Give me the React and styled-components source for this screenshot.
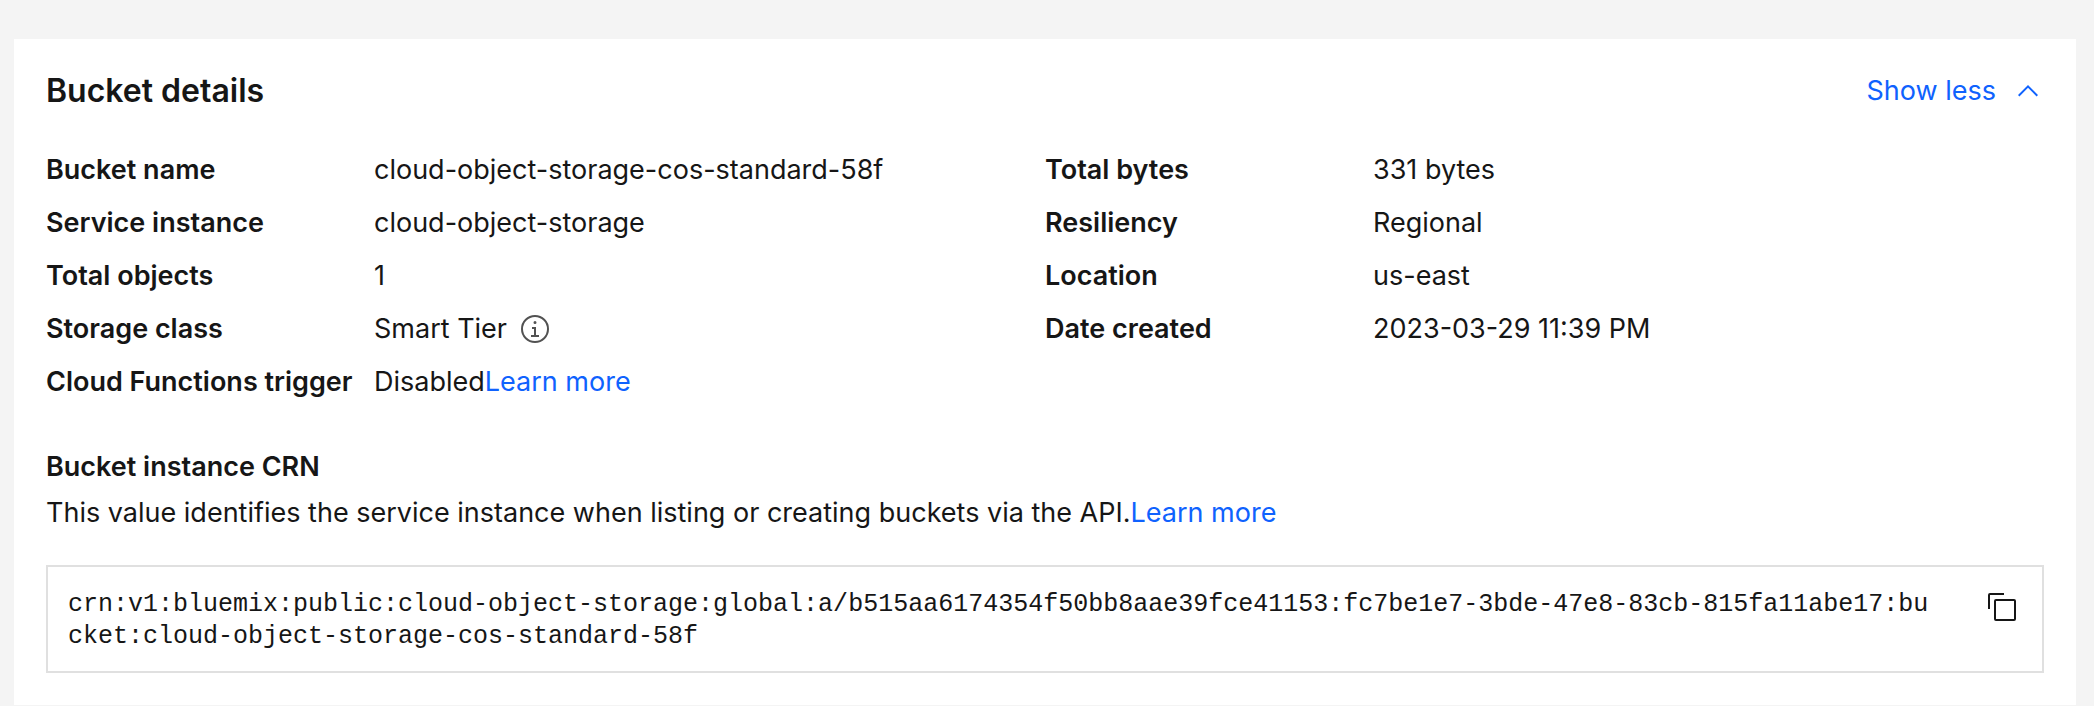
import React, { useState } from "react";
import styled, { createGlobalStyle } from "styled-components";

const GlobalStyle = createGlobalStyle`
  *, *::before, *::after { box-sizing: border-box; }
  body {
    margin: 0;
    background: #f4f4f4;
    color: #161616;
    font-family: Inter, "Liberation Sans", sans-serif;
    font-size: 27px;
    line-height: 36px;
  }
`;

const Page = styled.main`
  padding: 39px 18px 1px 14px;
`;

const Card = styled.section`
  padding: 32px;
  background: #ffffff;
`;

const Header = styled.header`
  display: flex;
  align-items: center;
  justify-content: space-between;
  margin-bottom: 41px;
`;

const Title = styled.h2`
  margin: 0;
  font-size: 32px;
  line-height: 40px;
  font-weight: 600;
`;

const ToggleButton = styled.button`
  display: flex;
  align-items: center;
  gap: 16px;
  padding: 0;
  border: 0;
  background: none;
  color: #0f62fe;
  font: inherit;
  cursor: pointer;
`;

const Icon = styled.svg.attrs({ viewBox: "0 0 32 32", "aria-hidden": true })`
  display: block;
  flex: none;
  width: 32px;
  height: 32px;
  fill: currentColor;
`;

const ToggleIcon = styled(Icon)`
  transform: rotate(${(p) => (p.$open ? 0 : 180)}deg);
`;

const DetailColumns = styled.div`
  display: grid;
  grid-template-columns: 1fr 1fr;
  margin-bottom: 49px;
`;

const DetailList = styled.dl`
  display: flex;
  flex-direction: column;
  gap: 17px;
  margin: 0;
`;

const DetailRow = styled.div`
  display: grid;
  grid-template-columns: 328px 1fr;
`;

const Label = styled.dt`
  font-weight: 600;
  white-space: nowrap;
`;

const Value = styled.dd`
  display: flex;
  align-items: center;
  height: 36px;
  margin: 0;
`;

const InfoButton = styled.button`
  margin-left: 12px;
  padding: 0;
  border: 0;
  background: none;
  color: #525252;
  cursor: pointer;
`;

const Link = styled.a`
  color: #0f62fe;
  text-decoration: none;
`;

const SectionTitle = styled.h3`
  margin: 0 0 10px;
  font-size: 27px;
  font-weight: 600;
`;

const Description = styled.p`
  margin: 0 0 34px;
`;

const Snippet = styled.div`
  display: flex;
  align-items: flex-start;
  gap: 48px;
  padding: 22px 24px 18px 20px;
  border: 2px solid #e0e0e0;
`;

const Code = styled.code`
  flex: 1;
  min-width: 0;
  font-family: "Liberation Mono", monospace;
  font-size: 25px;
  line-height: 32px;
  word-break: break-all;
`;

const CopyButton = styled.button`
  flex: none;
  margin-top: 2px;
  padding: 0;
  border: 0;
  background: none;
  color: #161616;
  cursor: pointer;
`;

const CRN =
  "crn:v1:bluemix:public:cloud-object-storage:global:a/b515aa6174354f50bb8aae39fce41153:fc7be1e7-3bde-47e8-83cb-815fa11abe17:bucket:cloud-object-storage-cos-standard-58f";

const leftDetails = [
  { label: "Bucket name", value: "cloud-object-storage-cos-standard-58f" },
  { label: "Service instance", value: "cloud-object-storage" },
  { label: "Total objects", value: "1" },
  { label: "Storage class", value: "Smart Tier", info: true },
  { label: "Cloud Functions trigger", value: "Disabled", link: true },
];

const rightDetails = [
  { label: "Total bytes", value: "331 bytes" },
  { label: "Resiliency", value: "Regional" },
  { label: "Location", value: "us-east" },
  { label: "Date created", value: "2023-03-29 11:39 PM" },
];

function Details({ items }) {
  return (
    <DetailList>
      {items.map((item) => (
        <DetailRow key={item.label}>
          <Label>{item.label}</Label>
          <Value>
            {item.value}
            {item.info && (
              <InfoButton type="button" aria-label="About Smart Tier">
                <Icon>
                  <path d="M17 22V14H13v2h2v6H12v2h8V22zM16 8a1.5 1.5 0 1 0 1.5 1.5A1.5 1.5 0 0 0 16 8z" />
                  <path d="M16 30A14 14 0 1 1 30 16 14 14 0 0 1 16 30zM16 4A12 12 0 1 0 28 16 12 12 0 0 0 16 4z" />
                </Icon>
              </InfoButton>
            )}
            {item.link && <Link href="#functions">Learn more</Link>}
          </Value>
        </DetailRow>
      ))}
    </DetailList>
  );
}

export default function App() {
  const [open, setOpen] = useState(true);
  return (
    <>
      <GlobalStyle />
      <Page>
        <Card>
          <Header>
            <Title>Bucket details</Title>
            <ToggleButton type="button" aria-expanded={open} onClick={() => setOpen(!open)}>
              {open ? "Show less" : "Show more"}
              <ToggleIcon $open={open}>
                <path d="M16 10L26 20 24.6 21.4 16 12.8 7.4 21.4 6 20z" />
              </ToggleIcon>
            </ToggleButton>
          </Header>
          {open && (
            <>
              <DetailColumns>
                <Details items={leftDetails} />
                <Details items={rightDetails} />
              </DetailColumns>
              <SectionTitle>Bucket instance CRN</SectionTitle>
              <Description>
                This value identifies the service instance when listing or creating buckets via the API.
                <Link href="#crn">Learn more</Link>
              </Description>
              <Snippet>
                <Code>{CRN}</Code>
                <CopyButton
                  type="button"
                  aria-label="Copy to clipboard"
                  onClick={() => navigator.clipboard?.writeText(CRN)}
                >
                  <Icon>
                    <path d="M28 10V28H10V10H28m0-2H10a2 2 0 0 0-2 2V28a2 2 0 0 0 2 2H28a2 2 0 0 0 2-2V10a2 2 0 0 0-2-2Z" />
                    <path d="M4 18H2V4A2 2 0 0 1 4 2H18V4H4Z" />
                  </Icon>
                </CopyButton>
              </Snippet>
            </>
          )}
        </Card>
      </Page>
    </>
  );
}
